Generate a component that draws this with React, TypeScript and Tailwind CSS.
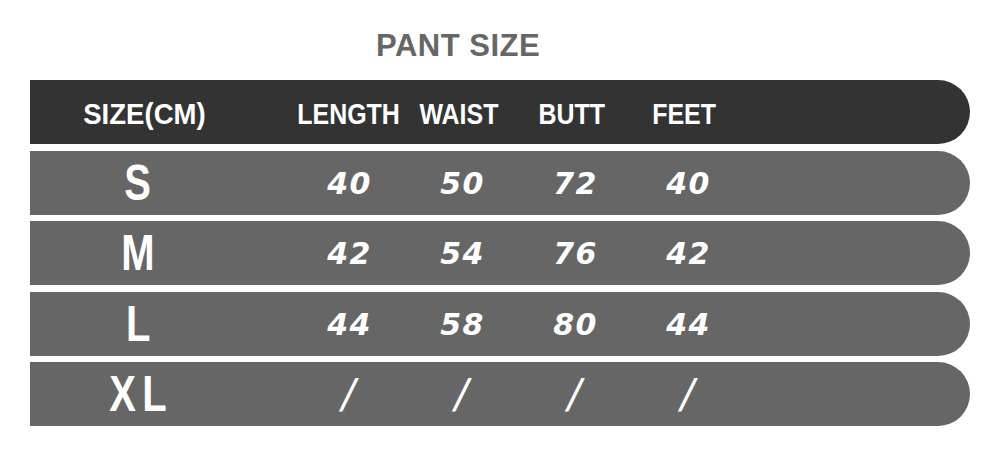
const columns = ["LENGTH", "WAIST", "BUTT", "FEET"];

const rows = [
  { size: "S", values: ["40", "50", "72", "40"] },
  { size: "M", values: ["42", "54", "76", "42"] },
  { size: "L", values: ["44", "58", "80", "44"] },
  { size: "XL", values: ["/", "/", "/", "/"] },
];

const sans = "font-['Liberation_Sans',Arial,sans-serif] font-bold";

export default function App() {
  return (
    <div className="w-[1000px] h-[466px] bg-white overflow-hidden">
      <h1 className={`pt-[30px] pl-[376px] text-[31px] leading-none text-[#666666] tracking-[0.5px] ${sans}`}>
        PANT SIZE
      </h1>

      <div className="mt-[19px] ml-[30px] w-[940px] flex flex-col gap-[6.5px]">
        {/* header bar */}
        <div className="h-[64px] bg-[#333333] rounded-r-full flex items-center text-white pt-[4px]">
          <div className={`w-[216px] pl-3 text-center text-[29px] leading-none ${sans}`}>
            <span className="inline-block scale-x-[0.95]">SIZE(CM)</span>
          </div>
          <div className="ml-[43px] flex">
            {columns.map((col) => (
              <div
                key={col}
                className={`w-[113px] text-center text-[29px] leading-none ${sans}`}
              >
                <span className="inline-block scale-x-[0.86]">{col}</span>
              </div>
            ))}
          </div>
        </div>

        {rows.map((row) => (
          <div
            key={row.size}
            className="h-[64px] bg-[#666666] rounded-r-full flex items-center text-white"
          >
            <div className={`w-[216px] text-center text-[50px] leading-none ${sans}`}>
              <span
                className={`inline-block scale-x-[0.8] ${
                  row.size === "XL" ? "tracking-[8px] pl-[8px]" : ""
                }`}
              >
                {row.size}
              </span>
            </div>
            <div className="ml-[43px] flex">
              {row.values.map((v, i) => (
                <div
                  key={i}
                  className={`w-[113px] text-center leading-none italic font-['DejaVu_Sans',Verdana,sans-serif] ${
                    v === "/"
                      ? "text-[40px] font-normal pl-[6px]"
                      : "text-[30px] font-bold tracking-[1.5px] pl-[8px] pt-[2px]"
                  }`}
                >
                  {v}
                </div>
              ))}
            </div>
          </div>
        ))}
      </div>
    </div>
  );
}
